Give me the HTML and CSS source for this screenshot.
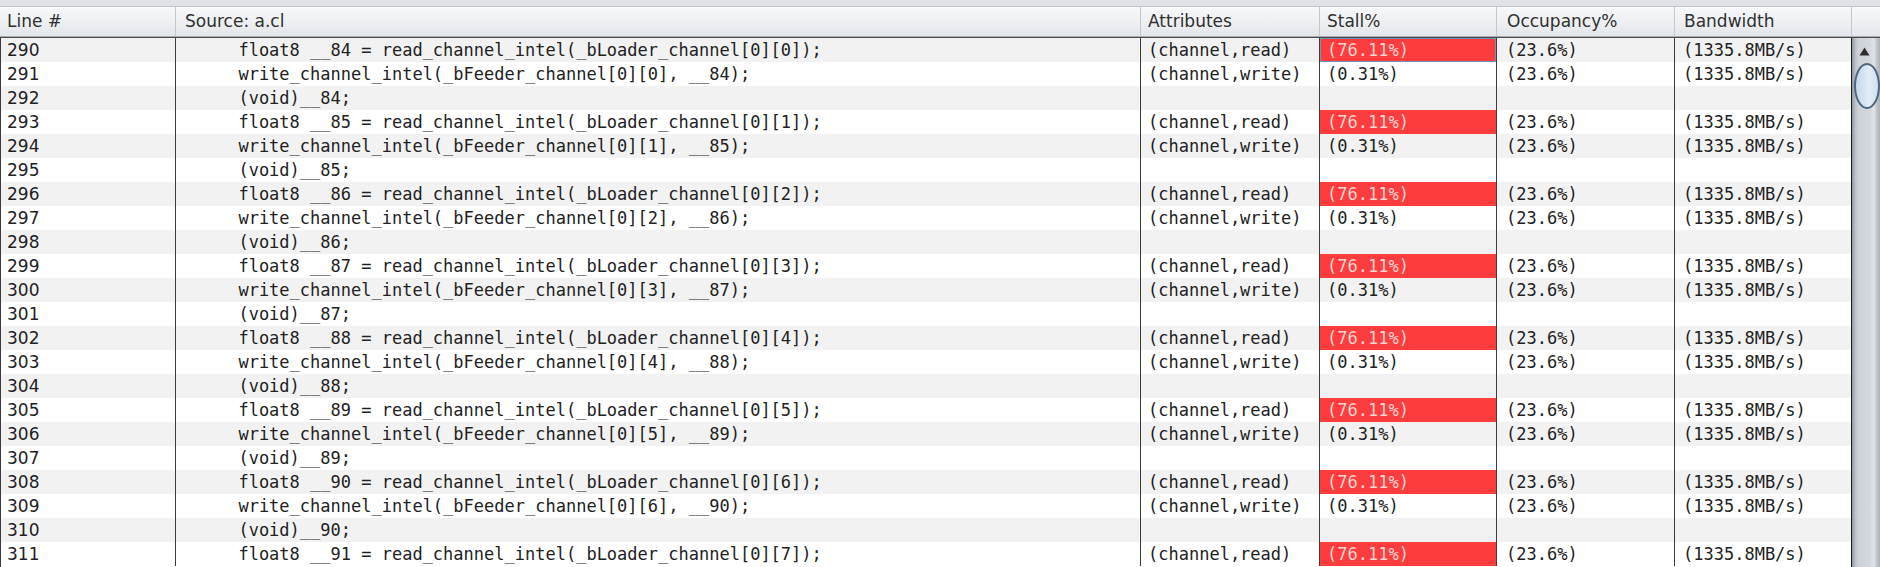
FILE: index.html
```html
<!DOCTYPE html>
<html>
<head>
<meta charset="utf-8">
<link rel="stylesheet" href="styles.css">
</head>
<body>
<div class="app">
  <div class="topstrip"></div>
  <div class="header">
    <div class="hcell c-line">Line #</div>
    <div class="hcell c-src">Source: a.cl</div>
    <div class="hcell c-attr">Attributes</div>
    <div class="hcell c-stall">Stall%</div>
    <div class="hcell c-occ">Occupancy%</div>
    <div class="hcell c-bw">Bandwidth</div>
    <div class="hcell c-corner"></div>
  </div>
  <div class="main">
    <div class="table" id="table"></div>
    <div class="scrollbar">
      <div class="sb-up"><svg width="11" height="9" viewBox="0 0 11 9"><path d="M5.5 0.5 L10.5 8.5 L0.5 8.5 Z" fill="#2e2e2e"/></svg></div>
      <div class="sb-thumb"></div>
    </div>
  </div>
</div>
<script src="app.js"></script>
</body>
</html>
```

FILE: app.js
```js
(function () {
  var t = document.getElementById('table');
  var html = '';
  var line = 290;
  for (var i = 0; i < 8; i++) {
    var k = 84 + i;
    var rows = [
      { code: '      float8 __' + k + ' = read_channel_intel(_bLoader_channel[0][' + i + ']);', attr: '(channel,read)', stall: '(76.11%)', red: true, occ: '(23.6%)', bw: '(1335.8MB/s)' },
      { code: '      write_channel_intel(_bFeeder_channel[0][' + i + '], __' + k + ');', attr: '(channel,write)', stall: '(0.31%)', red: false, occ: '(23.6%)', bw: '(1335.8MB/s)' },
      { code: '      (void)__' + k + ';', attr: '', stall: '', red: false, occ: '', bw: '' }
    ];
    for (var r = 0; r < rows.length; r++) {
      if (line > 311) break;
      var d = rows[r];
      var idx = line - 290;
      var cls = 'row' + (idx % 2 === 0 ? ' alt' : '');
      var stallCls = 'cell c-stall' + (d.red ? ' red' : '') + (idx === 0 ? ' focus' : '');
      html += '<div class="' + cls + '">' +
        '<div class="cell c-line">' + line + '</div>' +
        '<div class="cell c-src mono">' + d.code + '</div>' +
        '<div class="cell c-attr mono">' + d.attr + '</div>' +
        '<div class="' + stallCls + ' mono">' + d.stall + '</div>' +
        '<div class="cell c-occ mono">' + d.occ + '</div>' +
        '<div class="cell c-bw mono">' + d.bw + '</div>' +
        '</div>';
      line++;
    }
  }
  t.innerHTML = html;
})();
```

FILE: styles.css
```css
html, body {
  margin: 0;
  padding: 0;
  width: 1880px;
  height: 567px;
  overflow: hidden;
  background: #ffffff;
}

.app {
  width: 1880px;
  height: 567px;
  display: flex;
  flex-direction: column;
  font-family: "DejaVu Sans", sans-serif;
  font-size: 17px;
  color: #222222;
}

.topstrip {
  height: 6px;
  background: #dfe2e7;
  border-bottom: 1px solid #c2c6cd;
  flex: none;
}

.header {
  flex: none;
  height: 29px;
  display: grid;
  grid-template-columns: 176px 965px 179px 177px 178px 177px 28px;
  background: linear-gradient(#f7f8fa, #eceef1 60%, #e3e6ea);
  border-bottom: 1px solid #a9aeb6;
}

.hcell {
  line-height: 29px;
  border-right: 1px solid #c5c9cf;
  padding-left: 7px;
  color: #303030;
  white-space: nowrap;
  overflow: hidden;
}

.header .c-line { padding-left: 7px; }
.header .c-src { padding-left: 9px; }
.header .c-attr { padding-left: 7px; }
.header .c-stall { padding-left: 7px; }
.header .c-occ { padding-left: 10px; }
.header .c-bw { padding-left: 9px; }
.header .c-corner { border-right: none; }

.main {
  flex: 1;
  display: flex;
  border-top: 1px solid #4a4a4a;
  min-height: 0;
}

.table {
  width: 1850px;
  flex: none;
  border-left: 1px solid #3a3a3a;
  border-right: 1px solid #1e1e1e;
  overflow: hidden;
}

.row {
  display: grid;
  grid-template-columns: 175px 965px 179px 177px 178px 175px;
  height: 24px;
  background: #ffffff;
}

.row.alt {
  background: #f2f2f2;
}

.cell {
  height: 24px;
  box-sizing: border-box;
  padding-top: 1px;
  line-height: 23px;
  border-right: 1px solid #3c3c3c;
  white-space: pre;
  overflow: hidden;
}

.row .cell:last-child {
  border-right: none;
}

.mono {
  font-family: "DejaVu Sans Mono", monospace;
  font-size: 17px;
}

.row .c-line { padding-left: 6px; }
.row .c-src { padding-left: 1px; }
.row .c-attr { padding-left: 7px; }
.row .c-stall { padding-left: 7px; }
.row .c-occ { padding-left: 9px; }
.row .c-bw { padding-left: 8px; }

.cell.red {
  background: #fd3d3d;
  color: #ffd2d2;
}

.cell.focus {
  box-shadow: inset 0 0 0 1px #7393b6;
}

.scrollbar {
  flex: 1;
  display: flex;
  flex-direction: column;
  align-items: center;
  background: linear-gradient(to right, #8f949b 0px, #b8bcc3 3px, #cdd2d9 6px, #d3d8df 18px, #e2e5ea 22px, #bfc3ca 25px, #aeb3ba 28px);
}

.sb-up {
  height: 22px;
  display: flex;
  align-items: center;
  justify-content: center;
  padding-top: 2px;
  margin-left: -3px;
}

.sb-thumb {
  margin-top: 1px;
  width: 26px;
  height: 46px;
  margin-left: 2px;
  box-sizing: border-box;
  border: 2px solid #4d6781;
  border-radius: 50%;
  background: linear-gradient(to right, #c4d6e8, #e3eef8 60%, #cfe0ef);
}
```
